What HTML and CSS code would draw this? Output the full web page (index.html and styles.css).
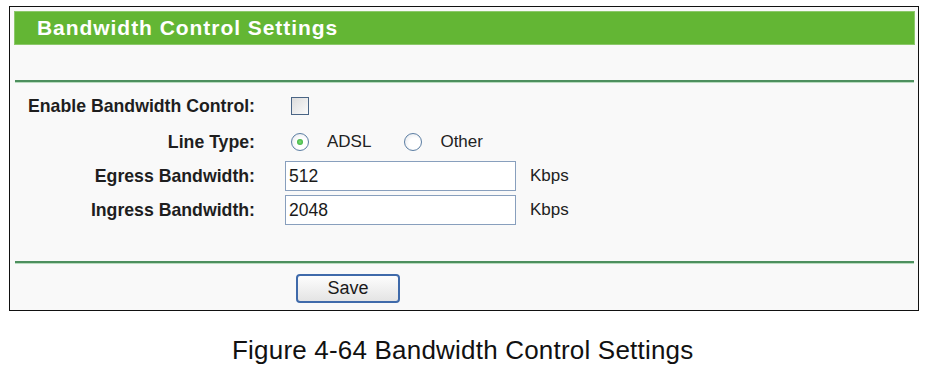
FILE: index.html
```html
<!DOCTYPE html>
<html>
<head>
<meta charset="utf-8">
<link rel="stylesheet" href="styles.css">
</head>
<body>
<div class="panel">
  <div class="header">Bandwidth Control Settings</div>
  <div class="rule"></div>
  <div class="form">
    <div class="label row1">Enable Bandwidth Control:</div>
    <div class="ctrl row1"><span class="checkbox"></span></div>

    <div class="label row2">Line Type:</div>
    <div class="ctrl row2">
      <span class="radio checked"></span><span class="opt">ADSL</span>
      <span class="radio other"></span><span class="opt">Other</span>
    </div>

    <div class="label row3">Egress Bandwidth:</div>
    <div class="ctrl row3"><span class="input">512</span><span class="unit">Kbps</span></div>

    <div class="label row4">Ingress Bandwidth:</div>
    <div class="ctrl row4"><span class="input">2048</span><span class="unit">Kbps</span></div>
  </div>
  <div class="rule rule2"></div>
  <div class="actions"><span class="button">Save</span></div>
</div>
<div class="caption">Figure 4-64 Bandwidth Control Settings</div>
</body>
</html>
```
FILE: styles.css
```css
html, body {
  margin: 0;
  padding: 0;
  background: #ffffff;
}
body {
  font-family: "Liberation Sans", Arial, sans-serif;
  color: #1a1a1a;
}
.panel {
  margin: 6px 0 0 9px;
  width: 908px;
  border: 1px solid #111;
  background: #f9f9f9;
  padding: 4px 0 7px 0;
}
.header {
  margin-left: 4px;
  width: 901px;
  height: 34px;
  background: #63b634;
  box-shadow: inset 0 0 0 1px #8cc86a;
  color: #fff;
  font-weight: bold;
  font-size: 21px;
  letter-spacing: 0.95px;
  line-height: 34px;
  padding-left: 23px;
  box-sizing: border-box;
}
.rule {
  margin: 35px 0 0 5px;
  width: 899px;
  height: 2px;
  background: #4d8f5e;
  box-shadow: 0 1px 0 #b9dcbf;
}
.rule2 {
  margin-top: 36px;
}
.form {
  display: grid;
  grid-template-columns: 245px 1fr;
  column-gap: 30px;
  margin-top: 11px;
}
.label {
  text-align: right;
  font-weight: bold;
  font-size: 17.7px;
  color: #1e1e1e;
  display: flex;
  align-items: center;
  justify-content: flex-end;
}
.ctrl {
  display: flex;
  align-items: center;
  font-size: 17px;
  color: #222;
}
.row1 { height: 26px; }
.row2 { height: 26px; margin-top: 10px; }
.row3 { height: 30px; margin-top: 6px; }
.row4 { height: 30px; margin-top: 4px; }
.checkbox {
  margin-left: 6px;
  width: 16px;
  height: 16px;
  border: 1px solid #4a6585;
  background: linear-gradient(135deg, #dcdcdc, #fbfbfb);
}
.radio {
  margin-left: 6px;
  width: 16px;
  height: 16px;
  border-radius: 50%;
  border: 1px solid #5c7ea3;
  background: radial-gradient(circle at 60% 60%, #ffffff 40%, #dfe3e8 100%);
  position: relative;
}
.radio.checked::after {
  content: "";
  position: absolute;
  left: 5px;
  top: 5px;
  width: 6px;
  height: 6px;
  border-radius: 50%;
  background: radial-gradient(circle, #7ee07a, #29a22f);
}
.radio.other {
  margin-left: 33px;
}
.opt {
  margin-left: 18px;
}
.input {
  height: 28px;
  border: 1px solid #889fbd;
  background: #fff;
  display: flex;
  align-items: center;
  padding-left: 3px;
  box-sizing: content-box;
  width: 226px;
  font-size: 17.5px;
  color: #1a1a1a;
}
.unit {
  margin-left: 14px;
  font-size: 17px;
}
.actions {
  margin-top: 11px;
  padding-left: 286px;
}
.button {
  display: flex;
  align-items: center;
  justify-content: center;
  width: 100px;
  height: 25px;
  border: 2px solid #3f6aaa;
  border-radius: 4px;
  background: linear-gradient(#fdfdfd, #e4e4e4);
  font-size: 18px;
  color: #1a1a1a;
}
.caption {
  margin-top: 24px;
  padding-left: 232px;
  font-size: 26px;
  letter-spacing: 0.2px;
  color: #111;
}
```
